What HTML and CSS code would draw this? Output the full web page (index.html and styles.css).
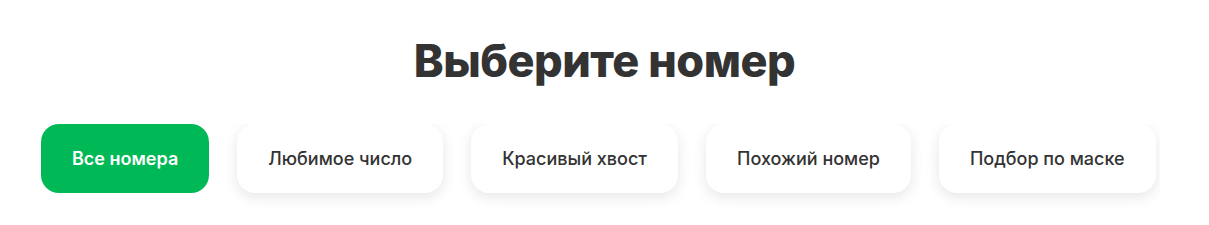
FILE: index.html
```html
<!DOCTYPE html>
<html lang="ru">
  <head>
    <meta charset="UTF-8" />
    <meta name="viewport" content="width=device-width, initial-scale=1.0" />
    <title>Выберите номер</title>
    <link rel="stylesheet" href="styles.css">
  </head>
  <body>
    <!-- Number picker -->
    <div class="picker">
      <h1 class="picker-title">Выберите номер</h1>
      <div class="tabs">
        <button class="tab active">Все номера</button>
        <button class="tab">Любимое число</button>
        <button class="tab">Красивый хвост</button>
        <button class="tab">Похожий номер</button>
        <button class="tab">Подбор по маске</button>
      </div>
    </div>
  </body>
</html>
```

FILE: styles.css
```css
body {
  font-family: Inter, "Noto Sans", Arial, sans-serif;
  margin: 0;
  padding: 0;
  background-color: #fff;
  color: #333;
}

.picker {
  padding-top: 34px;
}

.picker-title {
  margin: 0;
  text-align: center;
  font-size: 45px;
  font-weight: 800;
  line-height: 54px;
  letter-spacing: -0.5px;
  color: #333;
}

/* Tabs row */
.tabs {
  display: flex;
  gap: 28px;
  margin: 36px 49px 0 41px;
  padding: 0 0 30px;
  overflow: hidden;
}

.tab {
  flex: none;
  font-family: inherit;
  font-size: 18px;
  font-weight: 500;
  line-height: 21px;
  color: #333;
  background-color: #fff;
  border: none;
  border-radius: 18px;
  padding: 24px 31px;
  box-shadow: 0 4px 14px rgba(0, 0, 0, 0.1);
  cursor: pointer;
}

.tab.active {
  background-color: #00b956;
  color: #fff;
  font-weight: 600;
  box-shadow: none;
}
```
